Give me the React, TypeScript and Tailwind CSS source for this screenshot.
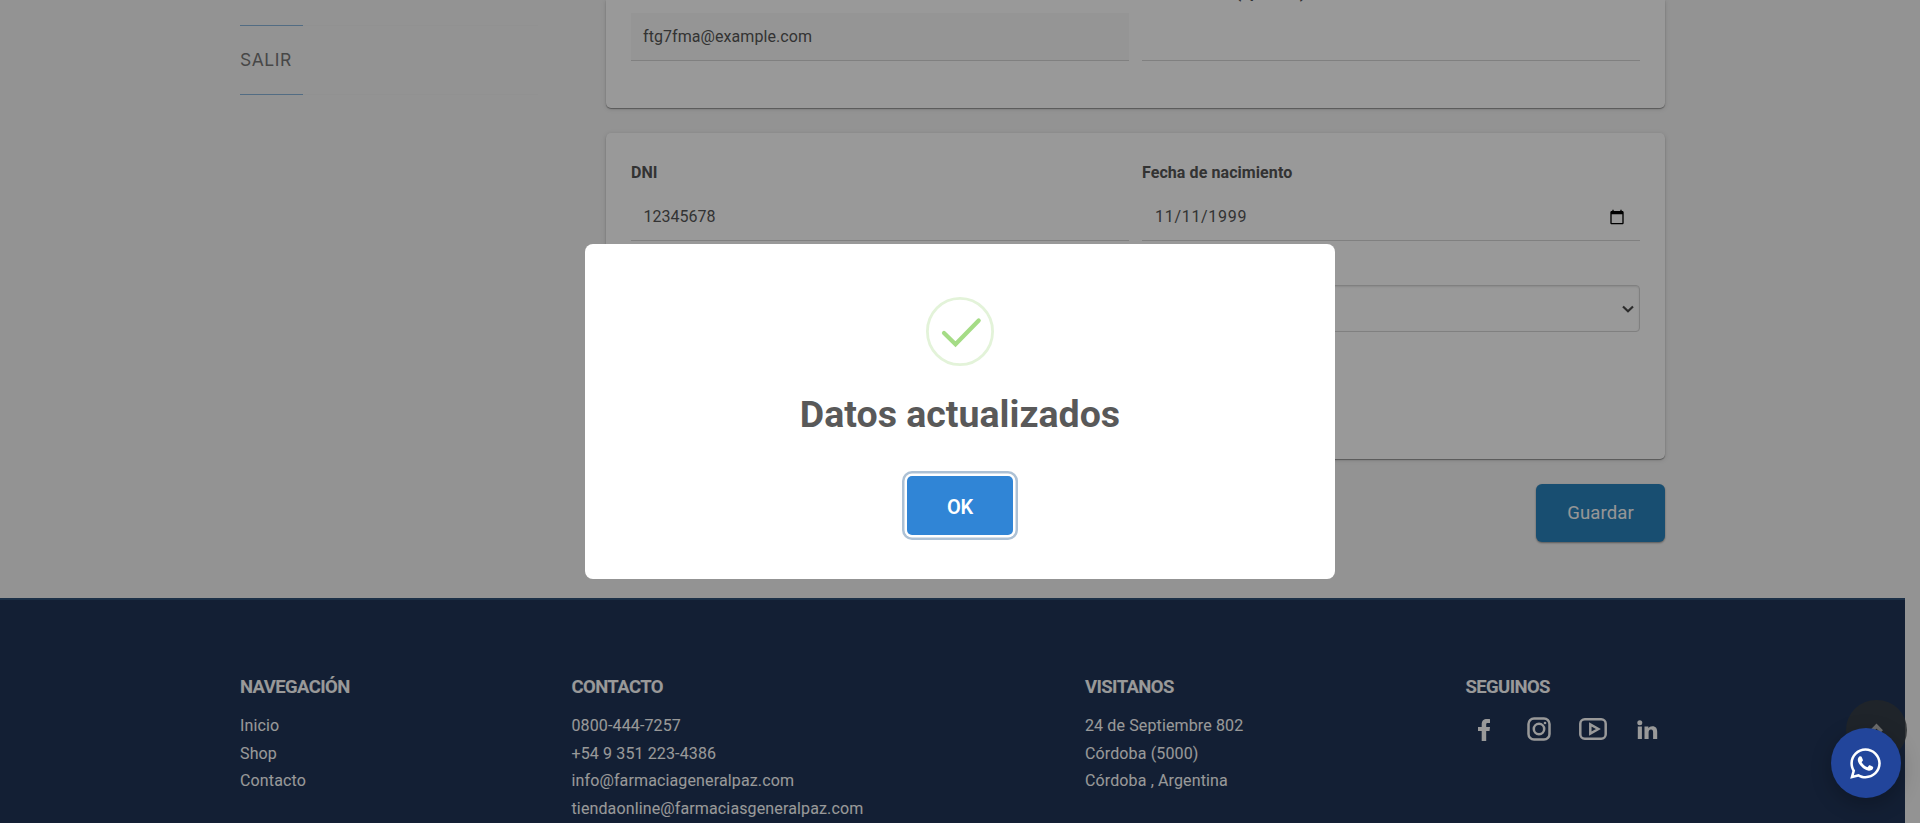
import React from "react";
import { FaWhatsapp } from "react-icons/fa";

const columns = [
  { title: "NAVEGACIÓN", width: "w-[331.500px]", items: ["Inicio", "Shop", "Contacto"] },
  {
    title: "CONTACTO",
    width: "w-[513.500px]",
    items: ["0800-444-7257", "+54 9 351 223-4386", "info@farmaciageneralpaz.com", "tiendaonline@farmaciasgeneralpaz.com"],
  },
  { title: "VISITANOS", width: "w-[380.500px]", items: ["24 de Septiembre 802", "Córdoba (5000)", "Córdoba , Argentina"] },
];

const cardShadow = "shadow-[0_1px_1px_rgba(0,0,0,0.35),0_1px_5px_rgba(0,0,0,0.14)]";

function Sidebar() {
  return (
    <nav className="w-[366px] shrink-0">
      <div className="flex h-[26px] w-[298px] flex-col justify-end">
        <div className="flex h-px bg-[#f2f2f2]">
          <div className="w-[63px] bg-[#89b5da]" />
        </div>
      </div>
      <a className="flex h-[68px] items-center pt-px font-[Inter] text-[17.5px] tracking-[0.5px] text-[#777]">SALIR</a>
      <div className="flex h-px w-[298px] bg-[#f2f2f2]">
        <div className="w-[63px] bg-[#89b5da]" />
      </div>
    </nav>
  );
}

function Form() {
  return (
    <div className="w-[1059px]">
      <section className={`h-[108px] rounded-b-[5px] bg-white px-[25px] ${cardShadow}`}>
        <div className="grid grid-cols-2 gap-x-[13px]">
          <div className="pt-[13px]">
            <div className="flex h-12 items-center border-b border-[#d5d5d5] bg-[#f9f9f9] px-3 tracking-[0.07px]">ftg7fma@example.com</div>
          </div>
          <div>
            <div className="h-[13px] overflow-hidden">
              <div className="-mt-[17px] text-base leading-5 font-bold tracking-[-0.35px] whitespace-nowrap">Otro teléfono (opcional)</div>
            </div>
            <div className="h-12 border-b border-[#d5d5d5]" />
          </div>
        </div>
      </section>

      <section className={`mt-[25px] h-[326px] rounded-[5px] bg-white px-[25px] pt-7 ${cardShadow}`}>
        <div className="grid grid-cols-2 gap-x-[13px]">
          <div>
            <label className="block leading-6 font-bold">DNI</label>
            <div className="mt-2 flex h-12 items-center border-b border-[#d5d5d5] px-[12.500px]">12345678</div>
          </div>
          <div>
            <label className="block leading-6 font-bold tracking-[0.08px]">Fecha de nacimiento</label>
            <div className="mt-2 flex h-12 items-center justify-between border-b border-[#d5d5d5] pr-[15px] pl-[13px]">
              <span className="tracking-[0.7px]">11/11/1999</span>
              <svg width="16" height="16" viewBox="0 0 24 24" fill="#000">
                <path d="M20 3h-1V1h-2v2H7V1H5v2H4c-1.100 0-2 .9-2 2v16c0 1.100.9 2 2 2h16c1.100 0 2-.9 2-2V5c0-1.100-.9-2-2-2zm0 18H4V8h16v13z" />
              </svg>
            </div>
          </div>
          <div />
          <div className="mt-11 flex h-[47px] items-center justify-end rounded-[4px] border border-[#d5d5d5] pr-[5px] shadow-[inset_0_1px_2px_rgba(0,0,0,0.1)]">
            <svg width="12" height="8" viewBox="0 0 12 8" fill="none" stroke="#4a4a4a" strokeWidth="2.2">
              <path d="M1 1.500 6 6.300 11 1.500" />
            </svg>
          </div>
        </div>
      </section>

      <div className="mt-[25px] flex justify-end">
        <button className="h-[58px] w-[129px] rounded-[6px] bg-[#2983bd] pt-px text-[18.5px] tracking-[0.12px] text-[#fbfbfb] shadow-[0_1px_2px_rgba(0,0,0,0.4)]">
          Guardar
        </button>
      </div>
    </div>
  );
}

function Footer() {
  return (
    <footer className="mt-14 flex h-[225px] w-[1905px] border-t-2 border-[#2f5077] bg-[#203558] pt-[75px] pl-[240px] text-white">
      {columns.map((c) => (
        <div key={c.title} className={c.width}>
          <h3 className="text-[18.5px] leading-6 font-bold tracking-[-0.6px]">{c.title}</h3>
          <ul className="mt-[13px]">
            {c.items.map((i) => (
              <li key={i} className="text-base leading-[27.600px] tracking-[0.13px] whitespace-nowrap">{i}</li>
            ))}
          </ul>
        </div>
      ))}
      <div>
        <h3 className="text-[18.5px] leading-6 font-bold tracking-[-0.6px]">SEGUINOS</h3>
        <div className="mt-[18px] flex h-6 items-center">
          <svg className="mt-px ml-[11px]" width="14" height="22" viewBox="0 0 14 22" fill="#fff">
            <path d="M13 .2V4h-2.400c-1.200 0-1.400.6-1.400 1.500V8H13l-.5 3.900H9.200V22H4.700V11.900H1V8h3.700V5.200C4.700 2 6.700.1 9.800.1c1.300 0 2.600 0 3.200.1z" />
          </svg>
          <svg className="ml-9" width="24" height="24" viewBox="0 0 24 24" fill="none" stroke="#fff" strokeWidth="2.500">
            <rect x="1.500" y="1.500" width="21" height="21" rx="5.500" />
            <circle cx="12" cy="12" r="5.200" />
            <circle cx="18" cy="6" r="1.300" fill="#fff" stroke="none" />
          </svg>
          <svg className="ml-7" width="28" height="22" viewBox="0 0 28 22" fill="none" stroke="#fff" strokeWidth="2.500">
            <rect x="1.300" y="1.300" width="25.400" height="19.400" rx="4.500" />
            <path d="M11.300 6.500v9l8-4.500z" />
          </svg>
          <svg className="mt-0.5 ml-[30px]" width="21" height="20" viewBox="0 0 21 20" fill="#fff">
            <circle cx="2.800" cy="2.700" r="2.500" />
            <path d="M.8 6.500h4.100V19H.8zM7.500 6.500h3.900v1.800c.7-1.200 2-2.100 3.900-2.100 3.800 0 4.900 2.200 4.900 5.800v7h-4.100v-6.200c0-1.600-.2-3.200-2.100-3.200s-2.400 1.500-2.400 3.100V19H7.500z" />
          </svg>
        </div>
      </div>
    </footer>
  );
}

function SuccessDialog() {
  return (
    <div className="fixed inset-0 flex items-center justify-center bg-black/40">
      <div className="flex h-[335px] w-[750px] flex-col items-center rounded-[8px] bg-white pt-[53px]">
        <svg width="68" height="69" viewBox="0 0 68 69" fill="none">
          <ellipse cx="34" cy="34.500" rx="32.600" ry="33.100" stroke="#e3f3d9" strokeWidth="2.800" />
          <path d="M18 36 29.500 47.300 52.700 23.500" stroke="#a5dc86" strokeWidth="4.200" strokeLinecap="round" />
        </svg>
        <h2 className="mt-[23px] text-[37.5px] leading-[50px] font-bold whitespace-nowrap text-[#595959]">Datos actualizados</h2>
        <button className="mt-[37px] h-[59px] w-[106px] rounded-[5px] bg-[#3085d6] pt-0.5 text-[20px] font-semibold tracking-[-0.2px] text-white shadow-[0_0_0_2.500px_#fff,0_0_0_5px_#adc1d5]">
          OK
        </button>
      </div>
    </div>
  );
}

export default function App() {
  return (
    <div className="relative h-[823px] w-[1920px] overflow-hidden bg-[#f5f5f5] font-[Roboto,sans-serif] text-base text-[#555]">
      <main className="flex h-[542px] pl-[240px]">
        <Sidebar />
        <Form />
      </main>
      <Footer />
      <button className="absolute top-[700px] left-[1846px] flex h-[60px] w-[61px] justify-center rounded-full bg-[#3a3e42]/80 pt-[23px]">
        <svg width="14" height="10" viewBox="0 0 14 10" fill="none" stroke="#b4b4b4" strokeWidth="3.500">
          <path d="M1.300 8.500 6.500 3 11.700 8.500" />
        </svg>
      </button>
      <SuccessDialog />
      <a className="absolute top-[728px] left-[1831px] flex h-[70px] w-[70px] items-center justify-center rounded-full bg-[#22459b] text-white shadow-[0_6px_20px_rgba(0,0,0,0.25)]">
        <FaWhatsapp className="mr-px h-[35px] w-[35px]" />
      </a>
    </div>
  );
}
